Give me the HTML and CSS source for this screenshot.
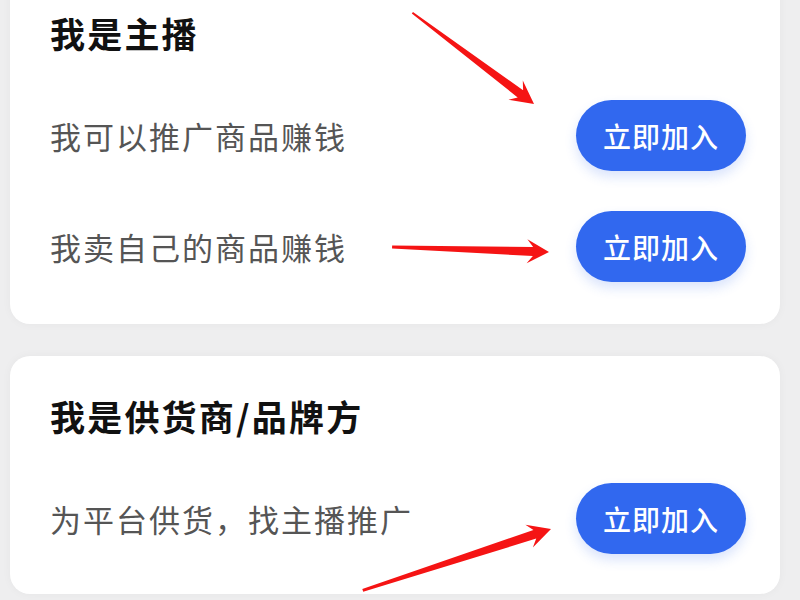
FILE: index.html
```html
<!DOCTYPE html>
<html lang="zh-CN">
<head>
    <meta charset="UTF-8">
    <meta name="viewport" content="width=device-width, initial-scale=1.0">
    <title>入驻选择</title>
    <link rel="stylesheet" href="styles.css">
</head>
<body>
    <div class="page">
        <!-- 主播 -->
        <div class="card card-first">
            <h2 class="card-title">我是主播</h2>
            <div class="row">
                <p class="row-text">我可以推广商品赚钱</p>
                <button type="button" class="btn">立即加入</button>
            </div>
            <div class="row">
                <p class="row-text">我卖自己的商品赚钱</p>
                <button type="button" class="btn">立即加入</button>
            </div>
        </div>

        <!-- 供货商 -->
        <div class="card">
            <h2 class="card-title">我是供货商/品牌方</h2>
            <div class="row">
                <p class="row-text">为平台供货，找主播推广</p>
                <button type="button" class="btn">立即加入</button>
            </div>
        </div>
    </div>

    <!-- 标注箭头 -->
    <svg class="arrows" width="800" height="600" viewBox="0 0 800 600">
        <g transform="translate(534 104) rotate(36.87)">
            <polygon points="0,0 -23,-12 -17,-4.5 -152,-1 -152,1 -17,4.5 -23,12"/>
        </g>
        <g transform="translate(549 252) rotate(1.84)">
            <polygon points="0,0 -22,-12 -16,-4.5 -157,-1.5 -157,1.5 -16,4.5 -22,12"/>
        </g>
        <g transform="translate(551 529) rotate(-18.07)">
            <polygon points="0,0 -23,-12 -17,-4.5 -198,-1.5 -198,1.5 -17,4.5 -23,12"/>
        </g>
    </svg>
</body>
</html>
```
FILE: styles.css
```css
* {
    margin: 0;
    padding: 0;
    box-sizing: border-box;
    font-family: "Noto Sans CJK SC", "Noto Sans", sans-serif;
}
body {
    width: 800px;
    height: 600px;
    overflow: hidden;
    background: #eeeeef;
    position: relative;
}
.page {
    display: flex;
    flex-direction: column;
    gap: 32px;
    padding: 0 20px 0 10px;
}
.card {
    background: #fff;
    border-radius: 20px;
    box-shadow: 0 0 10px rgba(0, 0, 0, 0.04);
    padding: 35px 34px 40px 40px;
    display: flex;
    flex-direction: column;
    gap: 40px;
}
.card-title {
    font-size: 35px;
    font-weight: 700;
    letter-spacing: 2.2px;
    line-height: 50px;
    color: #111;
    margin-bottom: 2px;
}
.card-first {
    margin-top: -27px;
    padding-bottom: 42px;
}
.row {
    display: flex;
    justify-content: space-between;
    align-items: center;
}
.row-text {
    font-size: 31px;
    letter-spacing: 2px;
    color: #555;
}
.btn {
    width: 170px;
    height: 71px;
    border: none;
    border-radius: 36px;
    background: #3168ef;
    color: #fff;
    font-size: 28px;
    font-weight: 500;
    letter-spacing: 1px;
    box-shadow: 0 6px 12px rgba(49, 104, 239, 0.18);
    cursor: pointer;
}
.arrows {
    position: absolute;
    top: 0;
    left: 0;
    fill: #f51414;
    pointer-events: none;
}
```
